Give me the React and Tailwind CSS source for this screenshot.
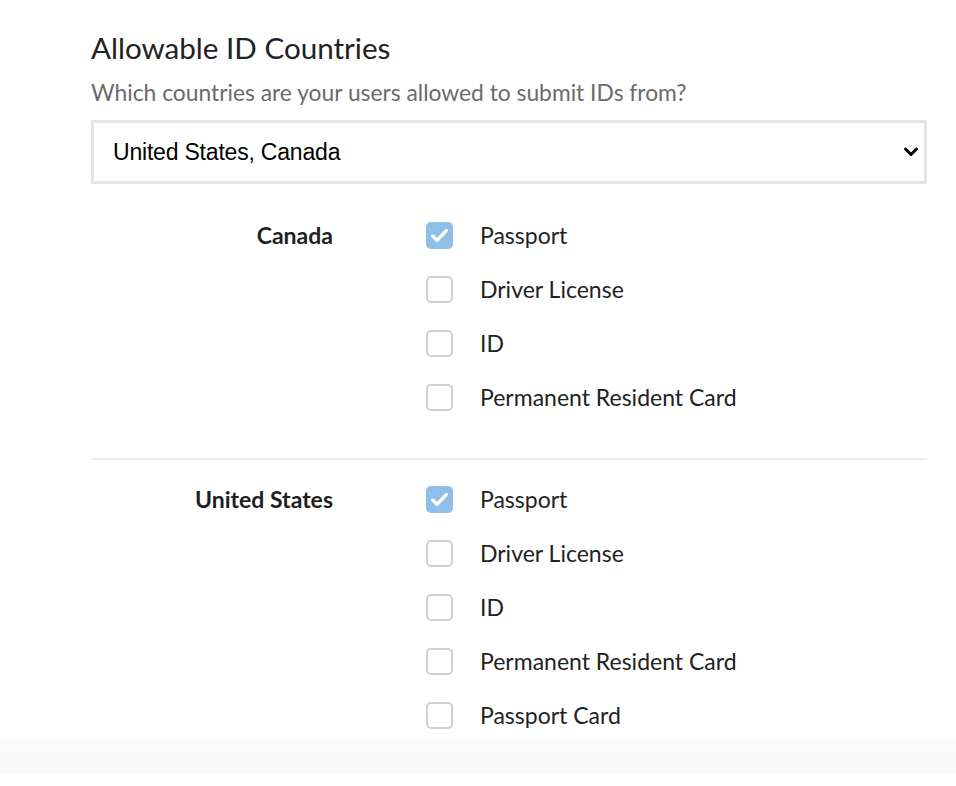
import React, { useState } from 'react';

const countries = [
  { name: 'Canada', docs: ['Passport', 'Driver License', 'ID', 'Permanent Resident Card'] },
  { name: 'United States', docs: ['Passport', 'Driver License', 'ID', 'Permanent Resident Card', 'Passport Card'] },
];

const Check = ({ checked, onClick }) => (
  <button
    type="button"
    onClick={onClick}
    className={
      checked
        ? 'flex h-[27px] w-[27px] shrink-0 items-center justify-center rounded-[5px] bg-[#8dbfe8]'
        : 'h-[27px] w-[27px] shrink-0 rounded-[5px] border-2 border-[#d0d0d0] bg-white'
    }
  >
    {checked && (
      <svg width="21" height="21" viewBox="0 0 20 20" fill="none">
        <path d="M3.5 10.5l4.2 4.2 8.8-9.4" stroke="white" strokeWidth="3.2" strokeLinecap="round" strokeLinejoin="round" />
      </svg>
    )}
  </button>
);

function CountryBlock({ country, values, onToggle }) {
  return (
    <div className="grid grid-cols-[242px_1fr] gap-x-[93px]">
      <div className="text-right text-[23px] leading-[27px] font-bold text-[#1f1f1f]">{country.name}</div>
      <div className="flex flex-col gap-[27px]">
        {country.docs.map((doc) => (
          <label key={doc} className="flex h-[27px] items-center gap-[27px] cursor-pointer">
            <Check checked={values[doc]} onClick={() => onToggle(doc)} />
            <span className="text-[23px] leading-[27px] text-[#222]">{doc}</span>
          </label>
        ))}
      </div>
    </div>
  );
}

export default function App() {
  const [state, setState] = useState({
    Canada: { Passport: true },
    'United States': { Passport: true },
  });

  const toggle = (c, doc) =>
    setState((prev) => ({ ...prev, [c]: { ...prev[c], [doc]: !prev[c][doc] } }));

  return (
    <div className="min-h-[786px] bg-white font-['Lato',sans-serif]">
      <div className="pl-[91px] pr-[29px] pt-[30px]">
        <h2 className="text-[29.6px] leading-[36px] text-[#222]">Allowable ID Countries</h2>
        <p className="mt-[12px] text-[22.8px] leading-[28px] text-[#6b6b6b]">
          Which countries are your users allowed to submit IDs from?
        </p>
        <div className="mt-[14px] flex h-[64px] items-center justify-between border-[3px] border-[#e6e6e6] bg-white pl-[19px] pr-[5px]">
          <span className="font-['Liberation_Sans',sans-serif] text-[23px] tracking-[-0.2px] text-black">United States, Canada</span>
          <svg width="16" height="16" viewBox="0 0 16 16">
            <path d="M2.5 5L8 10.5 13.5 5" stroke="black" strokeWidth="3" fill="none" strokeLinecap="round" strokeLinejoin="round" />
          </svg>
        </div>

        <div className="mt-[38px] pb-[47px]">
          <CountryBlock country={countries[0]} values={state.Canada} onToggle={(d) => toggle('Canada', d)} />
        </div>
        <div className="h-[2px] bg-[#ececec]" />
        <div className="pt-[26px] pb-[8px]">
          <CountryBlock country={countries[1]} values={state['United States']} onToggle={(d) => toggle('United States', d)} />
        </div>
      </div>
      <div className="h-[36px] bg-gradient-to-b from-[#fcfcfc] to-[#f8f8f8]" />
    </div>
  );
}
